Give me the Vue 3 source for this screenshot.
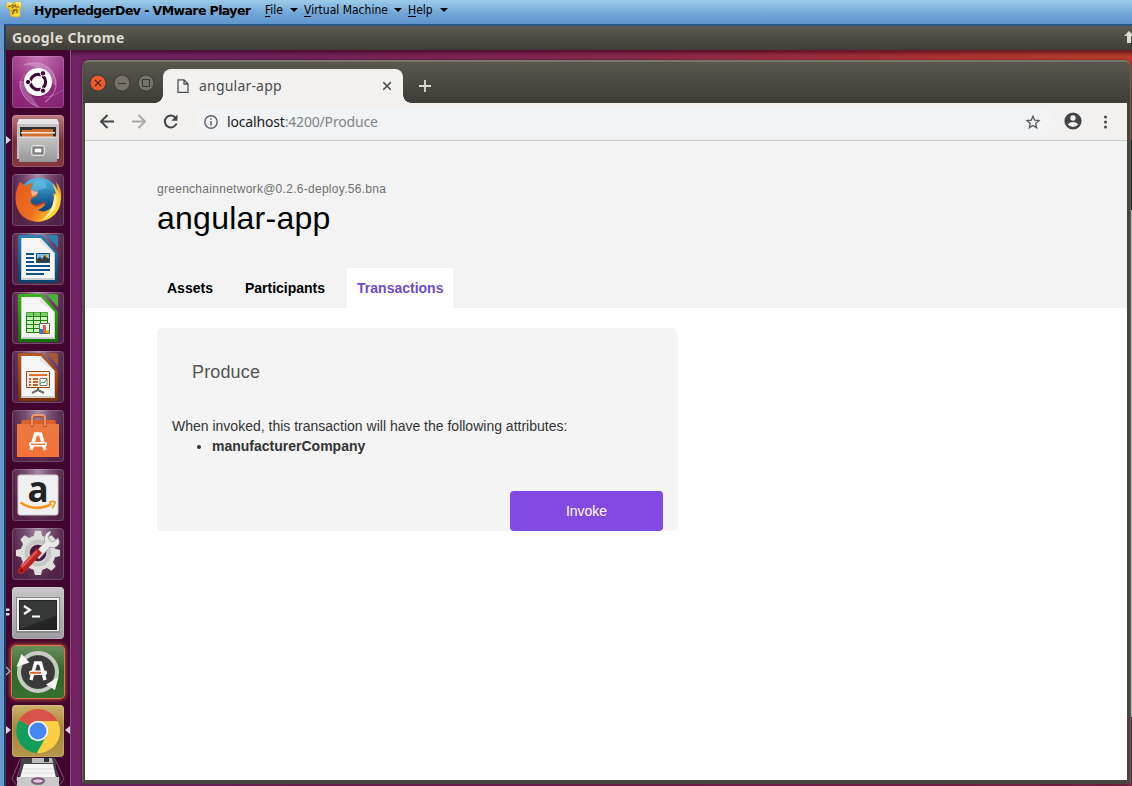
<script setup>
const tiles = [
  { id: 'dash' },
  { id: 'files', left: 'arrow' },
  { id: 'firefox' },
  { id: 'writer' },
  { id: 'calc' },
  { id: 'impress' },
  { id: 'software' },
  { id: 'amazon' },
  { id: 'settings' },
  { id: 'terminal', left: 'double' },
  { id: 'updater', left: 'outline' },
  { id: 'chrome', left: 'arrow', right: true }
]
const docs = {
  writer: ['#2b80b5', '#0b4068', '#2f7fae'],
  calc: ['#35b316', '#127004', '#4fae42'],
  impress: ['#b35a22', '#7a3208', '#a2583c']
}
const teeth = [0, 45, 90, 135, 180, 225, 270, 315]
const menus = [
  { key: 'F', rest: 'ile', cls: 'm-file' },
  { key: 'V', rest: 'irtual Machine', cls: 'm-vm' },
  { key: 'H', rest: 'elp', cls: 'm-help' }
]
</script>

<template>
  <div class="host">
    <header class="hostbar">
      <svg class="vmlogo" viewBox="0 0 16 16" width="16" height="16">
        <path d="M0 2h5l1 1 3-2h6v6l-1 2v6l-2 1H6l-2-2V9L0 6z" fill="#f3c92a" stroke="#d9a417" stroke-width=".6" />
        <path d="M1 2.500h4v2M10 2h4v3" stroke="#fff3a0" stroke-width="1.600" fill="none" />
        <path d="M2 5.500h2l3-2M6 7l3-3 1 2h3M5 10h3l3-2M8 8v3l-2 2M11 9v3" stroke="#7e661d" stroke-width="1.200" fill="none" />
        <path d="M13 10v4H8" stroke="#ffe23e" stroke-width="1.600" fill="none" />
      </svg>
      <span class="hosttitle">HyperledgerDev - VMware Player</span>
      <nav class="hostmenu">
        <span v-for="m in menus" :key="m.key" class="hm" :class="m.cls"><span class="lbl"><u>{{ m.key }}</u>{{ m.rest }}</span><i class="caret"></i></span>
      </nav>
    </header>
    <div class="guest">
      <div class="panel">
        <span>Google Chrome</span>
        <svg class="up" width="10" height="12" viewBox="0 0 10 12"><path d="M5 0l5 5H7v7H3V5H0z" fill="#dfdbd2" /></svg>
      </div>
      <div class="desk">
        <aside class="launcher">
          <div v-for="t in tiles" :key="t.id" class="tile" :class="t.id">
            <svg v-if="t.left" class="pip" width="6" height="10" viewBox="0 0 6 10">
              <path v-if="t.left === 'arrow'" d="M0 1l5 4-5 4z" fill="#dcd4dc" />
              <path v-else-if="t.left === 'outline'" d="M0 1l4 4-4 4" fill="none" stroke="#9fc0dc" stroke-width="1.200" />
              <path v-else d="M0 1.500h3l1 1-1 1.500H0zM0 6h3l1 1-1 1.500H0z" fill="#dcd4dc" />
            </svg>
            <svg v-if="t.right" class="pip pipr" width="6" height="10" viewBox="0 0 6 10"><path d="M5 1L0 5l5 4z" fill="#dcd4dc" /></svg>

            <svg class="ico" width="52" height="52" viewBox="0 0 52 52">
              <g v-if="t.id === 'dash'">
                <path d="M12 9C29 2 45 13 44 30L36 24Q30 10 12 9zM8 25q1 17 19 26Q14 34 14 25z" fill="#fff" opacity=".22" />
                <path d="M12 9C29 2 45 13 44 30q-1 9-11 16M8 25c-1 13 9 23 19 26" fill="none" stroke="#dba6cf" stroke-width="1.100" opacity=".6" />
                <path d="M13 18C3 28 11 45 25 50M32 41c8 0 14-3 19-8" fill="none" stroke="#dba6cf" opacity=".35" />
                <circle cx="26" cy="27" r="14.300" fill="#5d1652" opacity=".4" />
                <circle cx="26" cy="26" r="14" fill="#fff" />
                <circle cx="26" cy="26" r="7.600" fill="none" stroke="#3f0a35" stroke-width="3.200" />
                <g stroke="#fff" stroke-width="1.500"><path d="M26 26H13M26 26l6.500-11.300M26 26l6.500 11.300" /></g>
                <circle cx="26" cy="26" r="5.800" fill="#fff" />
                <g fill="#3f0a35" stroke="#fff" stroke-width="1"><circle cx="16" cy="26" r="2.700" /><circle cx="31" cy="17.300" r="2.700" /><circle cx="31" cy="34.700" r="2.700" /></g>
              </g>

              <g v-else-if="t.id === 'files'">
                <path d="M7 4h38l2 5v35H5V9z" fill="#c3c3c3" />
                <path d="M7 4h38l2 5H5z" fill="#e7e7e7" />
                <path d="M8 12h36v10H8z" fill="#303030" />
                <path d="M10 15h9l2-1h20v8H10z" fill="#cf7133" /><path d="M9 17h34v1.500H9z" fill="#fae5d3" />
                <path d="M7 22h38v25H7z" fill="url(#metal)" /><path d="M7 22h38" stroke="#eee" />
                <rect x="19.500" y="30.500" width="13" height="10" rx="2" fill="#a5a5a5" stroke="#e2e2e2" />
                <rect x="22" y="33" width="8" height="5" fill="#fff" stroke="#555" />
              </g>

              <g v-else-if="t.id === 'firefox'">
                <circle cx="27" cy="25" r="21" fill="url(#globe)" />
                <path d="M22 8q6-3 11 0l2 6-8 2-4 6-5-3z" fill="#71c9ea" opacity=".5" />
                <path d="M8 8l6 4q3-3 7-3-3 4-2 7l7 3q-1 4-6 5-3 3 0 6 4 3 9 0 3-2 4 1-3 3-7 5 7 4 14-3 3-7 1-14l3 2-1-6 3 3-2-10q6 6 5 17-1 19-22 23Q8 47 4 30q-2-12 4-22z" fill="url(#fox)" />
                <path d="M40 9q12 13 6 26-6 12-19 12 14-7 15-22l3 2-2-7 2 1z" fill="#ffd337" /><path d="M43 19q4 8-1 17-5 7-12 10 10-8 12-21z" fill="#fff2a1" />
                <path d="M19 16q3 2 7 2-2 4-6 4z" fill="#f7b58c" /><path d="M20 29q7 2 12-2 3 0 2 2-5 4-9 4-5-1-5-4z" fill="#b93a19" opacity=".55" />
              </g>

              <g v-else-if="docs[t.id]">
                <defs>
                  <linearGradient :id="'doc-' + t.id" x2="0" y2="1"><stop :stop-color="docs[t.id][0]" /><stop offset="1" :stop-color="docs[t.id][1]" /></linearGradient>
                </defs>
                <path d="M8 2h22l16 18v28q0 2-2 2H8q-2 0-2-2V4q0-2 2-2z" :fill="`url(#doc-${t.id})`" />
                <path d="M34 2h10q2 0 2 2v11z" :fill="docs[t.id][2]" />
                <path d="M9 5h20l14 15v27H9z" fill="#ccc" />
                <path d="M10 5h18l14 15v25H10z" fill="#f6f6f6" />
                <path d="M28 5l14 15-14-10z" fill="#e4e4e4" />
                <g v-if="t.id === 'writer'">
                  <path d="M14 21h8M14 25h8M14 29h8M14 33h24M14 37h24M14 41h18" stroke="#0c5386" stroke-width="2" />
                  <path d="M24.500 20.500h13v9h-13z" fill="#88bce5" stroke="#174d73" /><path d="M25 29v-3l3-2 2 2 3-4 4 4v3z" fill="#353d3d" /><circle cx="35" cy="23" r="1.500" fill="#e7bd46" />
                </g>
                <g v-else-if="t.id === 'calc'">
                  <path d="M14.500 20.500h21v20h-21z" fill="#cdf2bd" stroke="#158608" />
                  <path d="M14.500 20.500h21v4h-21z" fill="#83ce70" />
                  <path d="M14 24.500h22M14 28.500h22M14 32.500h22M14 36.500h22M21.500 20v21M28.500 20v21" stroke="#158608" fill="none" />
                  <path d="M27.500 31.500h10v10h-10z" fill="#fff" stroke="#666" /><path d="M28 37h3v4h-3z" fill="#2683c4" /><path d="M31 33h3v8h-3z" fill="#df6839" /><path d="M34 38h3v3h-3z" fill="#e8b41b" />
                </g>
                <g v-else>
                  <path d="M26 37v2l-6 3M26 39l6 3" stroke="#68706d" stroke-width="2" fill="none" />
                  <path d="M14.500 20.500h23v16h-23z" fill="#fff2e8" stroke="#a34916" />
                  <path d="M17 24h18" stroke="#e06f2d" stroke-width="2" /><path d="M17 28h2M17 31h2M17 34h2M21 28h5M21 31h5M21 34h5" stroke="#cb602e" stroke-width="1.800" />
                  <path d="M28 27.500h7v7h-7z" fill="#fff" stroke="#777" /><path d="M28 33l2-2 2 1 3-4" stroke="#2b9b36" fill="none" />
                </g>
              </g>

              <g v-else-if="t.id === 'software'">
                <path d="M5 14h4l1-4h33l1 4h3v33H5z" fill="#dc622d" /><path d="M5 14h42v33H5z" fill="url(#bag)" />
                <path d="M20 17V9q0-3 3-3h7q3 0 3 3v8" fill="none" stroke="#a94c2b" stroke-width="3" /><path d="M20 16V8q0-3 3-3h7q3 0 3 3v8" fill="none" stroke="#ef9a70" stroke-width="1.800" />
                <path d="M19 40l4.500-16h5L33 40" fill="none" stroke="#fff" stroke-width="3.400" /><rect x="17" y="32" width="18" height="4.500" rx="1.800" fill="#fff" /><path d="M19 34.300h14" stroke="#eb6c33" stroke-width="1.300" />
                <path d="M5 38h42v9H5z" fill="#ff6d32" opacity=".18" />
              </g>

              <g v-else-if="t.id === 'amazon'">
                <rect x="6" y="6" width="40" height="40" rx="2" fill="#f0f0f0" stroke="#cfcfcf" />
                <text x="26" y="33" text-anchor="middle" class="aglyph">a</text>
                <path d="M8.500 33.500q15 10 31 1.500" fill="none" stroke="#f7941d" stroke-width="2.600" /><path d="M37 33.500q4-2 6-.5 0 3-3 6" fill="none" stroke="#f7941d" stroke-width="1.800" />
              </g>

              <g v-else-if="t.id === 'settings'">
                <g fill="#dededb"><path v-for="a in teeth" :key="a" d="M21.500 9l1.500-6h6l1.500 6v5h-9z" :transform="`rotate(${a} 26 25)`" /></g>
                <circle cx="26" cy="25" r="13" fill="none" stroke="#dededb" stroke-width="9" /><circle cx="26" cy="25" r="11.500" fill="none" stroke="#c6c6c4" stroke-width="4" /><circle cx="26" cy="25" r="8" fill="#4b1743" />
                <path d="M36 4q-5 4-3 10L22 26l5 5 11-12q6 2 9-3 1-3-1-6l-5 4-3-1-2-4 3-5q-1-1-3 0z" fill="#eaeae8" stroke="#999" stroke-width=".8" />
                <path d="M25 20l5 5-18 20q-3 2-5 0-2-2 0-5z" fill="#b92323" /><path d="M25 23L10 39" stroke="#e35a51" stroke-width="2.200" /><circle cx="9.500" cy="42.500" r="1.700" fill="#751313" />
              </g>

              <g v-else-if="t.id === 'terminal'">
                <path d="M4 10h44v36H4z" fill="#888" /><path d="M5 11h42v33H5z" fill="#eee" /><path d="M7 13h38v30H7z" fill="#222524" /><path d="M8 14h36v15L8 42z" fill="#555" opacity=".4" />
                <path d="M12 19l6 4-6 4" fill="none" stroke="#fff" stroke-width="2.200" /><path d="M20 29.500h8" stroke="#fff" stroke-width="2" />
              </g>

              <g v-else-if="t.id === 'updater'">
                <circle cx="26" cy="26" r="16.500" fill="#3b3a3a" /><circle cx="26" cy="26" r="19" fill="none" stroke="#c9c9c7" stroke-width="4" />
                <path d="M9.500 8L4.500 21l13-4.500z" fill="#f4f4f2" /><path d="M46.500 31L43 44l-9-5.500z" fill="#f4f4f2" />
                <path d="M19 34l4.500-17h5L33 34" fill="none" stroke="#fff" stroke-width="3.400" /><rect x="17" y="24.500" width="18" height="4.500" rx="2" fill="#fff" /><path d="M18 26.800h11" stroke="#dc642d" stroke-width="2" />
              </g>

              <g v-else>
                <circle cx="26" cy="26" r="22" fill="#e0b52d" />
                <path d="M26 26L7 15A22 22 0 0 1 45 15L46 17H26z" fill="#d9524a" />
                <path d="M7 15A22 22 0 0 0 25 48L34 31 26 26z" fill="#139f5b" />
                <path d="M26 16h19.500A22 22 0 0 1 25 48L35 31z" fill="#ffce42" />
                <circle cx="26" cy="26" r="10.200" fill="#f4f4f4" /><circle cx="26" cy="26" r="8.500" fill="#4587f3" />
              </g>
            </svg>
          </div>
          <svg class="drive" width="56" height="29" viewBox="0 0 56 29">
            <path d="M10 2L2 22l5 7M13 2L6 24M45 2l9 20-5 7M42 2l8 22" stroke="#785376" fill="none" />
            <path d="M11 1h34l3 27H8z" fill="#454545" /><path d="M22 1h20l1 5H22z" fill="#bcbcbc" /><path d="M34 1h5v4h-5z" fill="#333" />
            <path d="M14 7h29l3 14H10z" fill="#f5f5f5" /><path d="M13 12h31M12 16h33" stroke="#ddd" /><path d="M7 20h42v9H7z" fill="#c9c9c9" /><ellipse cx="28" cy="24" rx="6" ry="2.800" fill="#dbc6d9" stroke="#7a5a78" stroke-width="2" />
          </svg>
        </aside>

        <main class="stage">
          <div class="edge"></div>
          <section class="window">
            <div class="titlebar">
              <svg class="winbtns" width="66" height="20" viewBox="0 0 66 20">
                <circle cx="9" cy="10" r="8.500" fill="#393833" /><circle cx="9" cy="10" r="7.600" fill="#e95b2e" /><path d="M6 7l6 6M12 7l-6 6" stroke="#5b2512" stroke-width="1.200" />
                <circle cx="33" cy="10" r="8.500" fill="#393833" /><circle cx="33" cy="10" r="7.600" fill="#74736a" /><path d="M29 10.500h8" stroke="#383731" />
                <circle cx="57" cy="10" r="8.500" fill="#393833" /><circle cx="57" cy="10" r="7.600" fill="#74736a" /><path d="M53.500 6.500h7v7h-7z" stroke="#383731" fill="none" />
              </svg>
              <div class="tab">
                <svg width="12" height="14" viewBox="0 0 12 14" fill="none" stroke="#505050" stroke-width="1.300"><path d="M1 .8h6l4 4v8.500H1zM7 1v4h4" /></svg>
                <span>angular-app</span>
                <svg class="x" width="10" height="10" viewBox="0 0 10 10"><path d="M1.300 1.300l7.400 7.400M8.700 1.300L1.300 8.700" stroke="#4b4b4b" stroke-width="1.600" /></svg>
              </div>
              <svg class="plus" width="12" height="12" viewBox="0 0 12 12"><path d="M6 0v12M0 6h12" stroke="#dfdbd2" stroke-width="1.800" /></svg>
            </div>
            <div class="inner">
              <div class="toolbar">
                <svg class="nav" width="92" height="20" viewBox="0 0 92 20" fill="none" stroke-width="2">
                  <path d="M22 9.500H9M15.500 3L9 9.500 15.500 16" stroke="#454545" />
                  <path d="M40 9.500h13M46.500 3L53 9.500 46.500 16" stroke="#aaa8a6" />
                  <path d="M83.500 5.700A6 6 0 1 0 84.500 11.500" stroke="#454545" /><path d="M85.500 2.500v6.200h-6.200z" fill="#454545" />
                </svg>
                <div class="url">
                  <svg width="14" height="14" viewBox="0 0 14 14"><circle cx="7" cy="7" r="6.200" fill="none" stroke="#5f6368" stroke-width="1.400" /><path d="M7 6v4.500M7 3.300v1.500" stroke="#5f6368" stroke-width="1.500" /></svg>
                  <span class="addr">localhost<i>:4200/Produce</i></span>
                  <svg class="star" width="16" height="16" viewBox="0 0 16 16"><path d="M8 2.200l1.700 4 4.300.4-3.300 2.900 1 4.300L8 11.500l-3.700 2.300 1-4.300L2 6.600l4.300-.4z" fill="none" stroke="#55585c" stroke-width="1.300" /></svg>
                </div>
                <svg class="user" width="18" height="18" viewBox="0 0 18 18"><circle cx="9" cy="9" r="8.600" fill="#454545" /><circle cx="9" cy="6" r="2.700" fill="#f2f1f0" /><path d="M3.800 12.300q2.200-2.400 5.200-2.400t5.200 2.400Q12.500 15 9 15t-5.200-2.700z" fill="#f2f1f0" /></svg>
                <svg class="dots" width="4" height="14" viewBox="0 0 4 14" fill="#454545"><circle cx="2.500" cy="2" r="1.500" /><circle cx="2.500" cy="7" r="1.500" /><circle cx="2.500" cy="12" r="1.500" /></svg>
              </div>
              <div class="page">
                <div class="head">
                  <p class="net">greenchainnetwork@0.2.6-deploy.56.bna</p>
                  <h1>angular-app</h1>
                  <nav class="tabs"><a>Assets</a><a>Participants</a><a class="on">Transactions</a></nav>
                </div>
                <div class="card">
                  <h2>Produce</h2>
                  <p>When invoked, this transaction will have the following attributes:</p>
                  <ul><li>manufacturerCompany</li></ul>
                  <button>Invoke</button>
                </div>
              </div>
            </div>
          </section>
        </main>
      </div>
    </div>
    <svg class="defs" width="0" height="0">
      <defs>
        <linearGradient id="metal" x2="0" y2="1"><stop stop-color="#c6c6c6" /><stop offset="1" stop-color="#979797" /></linearGradient>
        <linearGradient id="bag" x2="0" y2="1"><stop stop-color="#ec7941" /><stop offset="1" stop-color="#f1743b" /></linearGradient>
        <linearGradient id="globe" x2="0" y2="1"><stop stop-color="#55b9e2" /><stop offset=".6" stop-color="#11558f" /><stop offset="1" stop-color="#092b60" /></linearGradient>
        <linearGradient id="fox" x2="1" y2=".5"><stop stop-color="#e45b1d" /><stop offset=".6" stop-color="#ee6f1f" /><stop offset="1" stop-color="#ffc52d" /></linearGradient>
      </defs>
    </svg>
  </div>
</template>

<style>
body { margin: 0; overflow: hidden; }
</style>
<style scoped>
* { box-sizing: border-box; }
.host { width: 1132px; height: 786px; overflow: hidden; display: flex; flex-direction: column; background: #6699cc; position: relative; }
.hostbar { height: 24px; flex: none; display: flex; align-items: flex-start; background: linear-gradient(#9ccbe9, #73a6d6 55%, #6095cc); color: #000; }
.vmlogo { margin: 1px 0 0 6px; flex: none; }
.hosttitle { font: bold 12.500px/21px "DejaVu Sans", sans-serif; margin-left: 12px; width: 231px; letter-spacing: -0.58px; white-space: nowrap; }
.hostmenu { display: flex; font: 12px/20px "DejaVu Sans Condensed", "DejaVu Sans", sans-serif; white-space: nowrap; }
.hostmenu u { text-underline-offset: 2px; }
.hm { display: flex; align-items: center; justify-content: space-between; }
.m-file { width: 33px; margin-right: 6px; }
.m-vm { width: 98px; margin-right: 6px; }
.m-help { width: 40px; }
.caret { border: 4px solid transparent; border-top-color: #000; border-bottom: 0; }
.guest { flex: 1; min-height: 0; margin-left: 4px; border-left: 2px solid #1f3f60; border-top: 2px solid #2b567f; display: flex; flex-direction: column; }
.panel { height: 24px; flex: none; background: linear-gradient(#5d5b51, #3e3d38); color: #dfdbd2; display: flex; justify-content: space-between; align-items: center; font: bold 14px/24px "Noto Sans", sans-serif; letter-spacing: .4px; padding-left: 6px; }
.panel .up { margin-right: -2px; margin-top: -3px; }
.desk { flex: 1; min-height: 0; display: flex; }
.launcher { width: 65px; flex: none; background: #41052f; border-right: 1px solid #8a4d86; padding: 6px 0 0 6px; display: flex; flex-direction: column; gap: 7px; }
.tile { width: 52px; height: 52px; flex: none; border-radius: 4px; position: relative; background: radial-gradient(ellipse at 50% 0, #a98ba7 0, #754d70 35%, #522346 75%); box-shadow: inset 0 0 0 1px rgba(255,255,255,.16); }
.tile .ico { display: block; }
.dash { background: radial-gradient(circle at 50% 0, #c777b5, #922b80 60%, #842473); }
.files { background: linear-gradient(#b97a7d, #7e3039 50%, #853640); }
.terminal { background: linear-gradient(#c8c5c9, #a19ea3); }
.updater { background: linear-gradient(#6a8e5c, #2d6628 50%, #37702f); box-shadow: 0 0 0 1px #d77b4e, 0 0 4px 2px #bb4b35; }
.chrome { background: linear-gradient(#cdb269, #a68538 45%, #b6984c); }
.pip { position: absolute; left: -6px; top: 20px; }
.pipr { left: 53px; }
.aglyph { font: bold 35px "Open Sans", sans-serif; fill: #222; }
.drive { margin: -7px 0 0 -2px; flex: none; }
.stage { flex: 1; position: relative; padding: 10px 0 0 11px; background: linear-gradient(90deg, #702362 0, #74225c 18%, #8b2850 50%, #a93038 78%, #ba3e2e 96%); box-shadow: inset 0 5px 4px -2px rgba(40,0,20,.6); }
.stage::after { content: ""; position: absolute; left: 0; right: 0; bottom: 0; height: 69px; background: linear-gradient(90deg, #702362, #752050 50%, #7e2849); }
.edge { position: absolute; right: 0; top: 90px; width: 3px; height: 577px; background: linear-gradient(#27272a 0, #27272a 70px, #dedede 70px); }
.window { position: relative; z-index: 1; width: 1049px; height: 724px; background: #46453e; border-radius: 7px 7px 3px 3px; border: 1px solid #605f56; border-top: 2px solid #77766b; border-bottom-color: #46453e; display: flex; flex-direction: column; box-shadow: 0 0 3px rgba(0,0,0,.45); }
.titlebar { height: 41px; flex: none; display: flex; background: linear-gradient(#59574e, #3d3c37); border-radius: 6px 6px 0 0; padding-left: 6px; }
.winbtns { margin-top: 11px; flex: none; }
.tab { margin: 7px 0 0 8px; width: 240px; height: 34px; background: #f2f1f0; border-radius: 8px 8px 0 0; position: relative; display: flex; align-items: center; padding-left: 14px; color: #4b4b4b; font: 14px/34px "Noto Sans", sans-serif; letter-spacing: .2px; }
.tab::before, .tab::after { content: ""; position: absolute; bottom: 0; width: 8px; height: 8px; }
.tab::before { left: -8px; background: radial-gradient(circle at 0 0, transparent 7.500px, #f2f1f0 8px); }
.tab::after { right: -8px; background: radial-gradient(circle at 100% 0, transparent 7.500px, #f2f1f0 8px); }
.tab span { margin-left: 10px; flex: 1; }
.tab .x { margin-right: 11px; }
.plus { margin: 18px 0 0 16px; }
.inner { margin: 0 3px 3px 2px; flex: 1; min-height: 0; display: flex; flex-direction: column; background: #fff; }
.toolbar { height: 38px; flex: none; background: #f2f1f0; border-bottom: 1px solid #cecdcc; display: flex; align-items: center; padding-left: 7px; }
.nav { flex: none; }
.url { width: 859px; height: 28px; border-radius: 14px; background: #f1f3f4; margin-left: 12px; display: flex; align-items: center; padding: 0 14px 0 8px; }
.url svg { flex: none; }
.addr { font: 14px/28px "Noto Sans", sans-serif; margin-left: 9px; color: #202124; flex: 1; letter-spacing: -.17px; }
.addr i { font-style: normal; color: #80868b; }
.user { margin-left: 9px; margin-top: -1px; }
.dots { margin-left: 21px; }
.page { flex: 1; font-family: "Liberation Sans", Arial, sans-serif; font-size: 14px; line-height: 20px; color: #333; }
.head { height: 167px; background: #f3f3f3; padding: 40px 0 0 72px; display: flex; flex-direction: column; }
.net { margin: 0; font-size: 12px; line-height: 17px; color: #707070; letter-spacing: .28px; }
h1 { margin: 0; font-size: 32px; line-height: 40px; font-weight: 400; color: #000; letter-spacing: .25px; }
.tabs { display: flex; margin-top: auto; gap: 12px; }
.tabs a { height: 40px; line-height: 40px; padding: 0 10px; color: #000; font-weight: 700; }
.tabs .on { color: #6f4bc9; background: #fff; }
.card { width: 521px; height: 203px; margin: 20px 0 0 72px; border-radius: 5px; background: #f4f4f4; padding: 31px 15px 0; display: flex; flex-direction: column; }
.card h2 { font-size: 18px; line-height: 26px; font-weight: 400; color: #555; margin: 0 0 31px 20px; letter-spacing: .15px; }
.card p { margin: 0; }
.card ul { margin: 0; padding-left: 40px; font-weight: 700; }
.card button { margin: auto 0 0 auto; width: 153px; height: 40px; border: 0; border-radius: 4px; background: #8349e3; color: #fff; font: 14px "Liberation Sans", Arial, sans-serif; }
.defs { position: absolute; }
</style>
